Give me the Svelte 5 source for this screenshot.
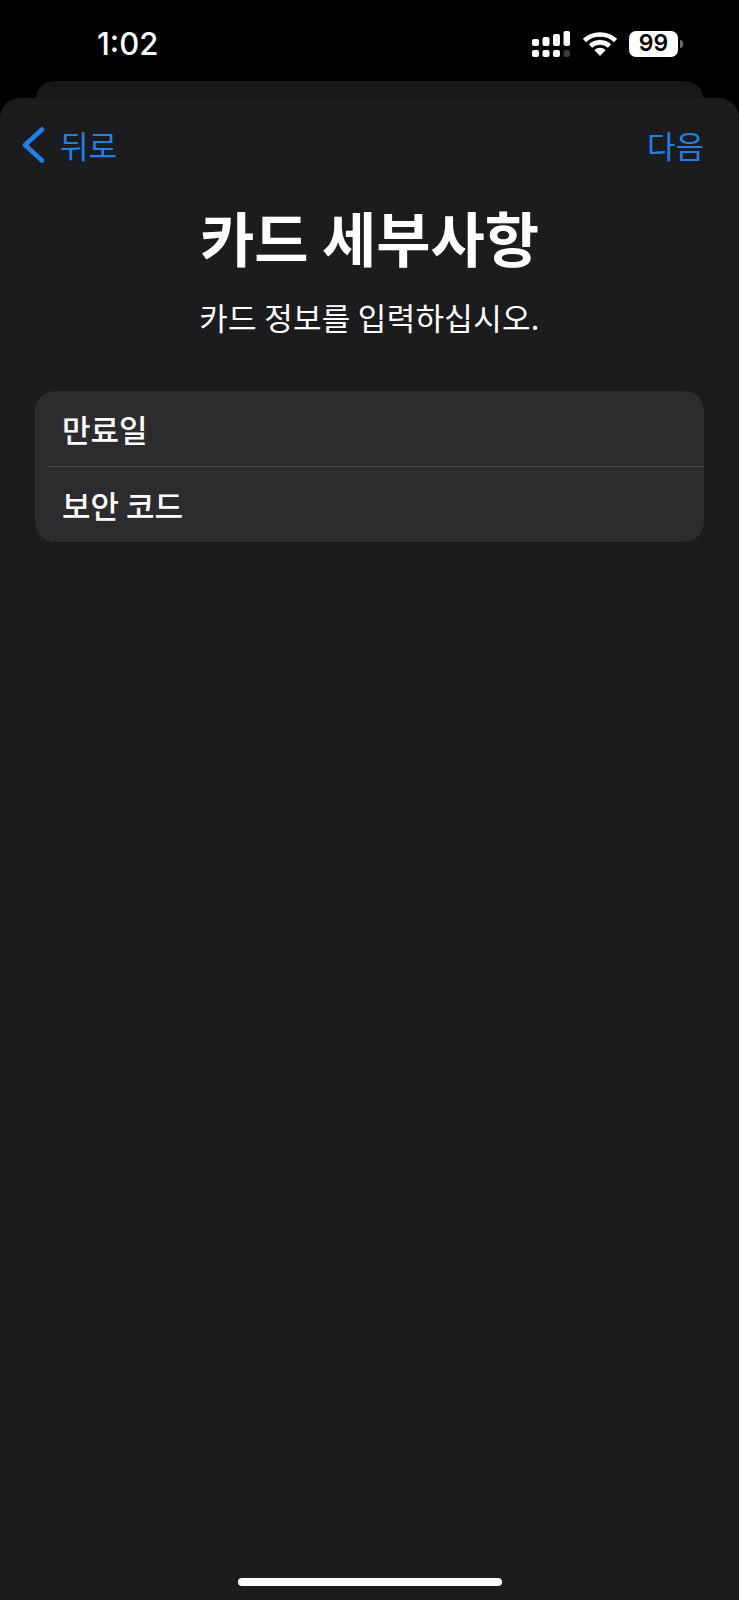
<script>
	const rows = ['만료일', '보안 코드'];
</script>

<div class="screen">
	<header class="status">
		<span class="time">1:02</span>
		<div class="indicators">
			<svg class="signal" width="38" height="26" viewBox="0 0 38 26" aria-hidden="true">
				<rect x="0" y="8" width="7" height="7" rx="2" fill="#fff" />
				<rect x="10.5" y="6" width="7" height="9" rx="2" fill="#fff" />
				<rect x="21" y="3" width="7" height="12" rx="2" fill="#fff" />
				<rect x="31.5" y="0" width="6.5" height="15" rx="2" fill="#fff" />
				<rect x="0" y="19" width="7" height="7" rx="2" fill="#fff" />
				<rect x="10.5" y="19" width="7" height="7" rx="2" fill="#fff" />
				<rect x="21" y="19" width="7" height="7" rx="2" fill="#fff" />
				<rect x="31.5" y="19" width="6.5" height="7" rx="2" fill="#3a3a3c" />
			</svg>
			<svg class="wifi" width="34" height="24" viewBox="0 0 34 24" aria-hidden="true">
				<path d="M1.5 8.5C10 0.5 24 0.5 32.5 8.5" fill="none" stroke="#fff" stroke-width="4.6" />
				<path d="M7.5 14C12.8 9.2 21.2 9.2 26.5 14" fill="none" stroke="#fff" stroke-width="4.6" />
				<path d="M11.5 18.2C14.8 15 19.2 15 22.5 18.2L17 24Z" fill="#fff" />
			</svg>
			<div class="battery"><span>99</span></div>
			<span class="nub"></span>
		</div>
	</header>

	<div class="sheet-back"></div>

	<main class="sheet">
		<nav class="nav">
			<button class="link back">
				<svg width="24" height="36" viewBox="0 0 24 36" aria-hidden="true">
					<path d="M21 2.5L4 18L21 33.5" fill="none" stroke="currentColor" stroke-width="4.6" stroke-linecap="round" stroke-linejoin="round" />
				</svg>
				<span>뒤로</span>
			</button>
			<button class="link">다음</button>
		</nav>

		<h1>카드 세부사항</h1>
		<p class="sub">카드 정보를 입력하십시오.</p>

		<section class="card">
			{#each rows as row (row)}
				<div class="row"><span>{row}</span></div>
			{/each}
		</section>

		<div class="home"></div>
	</main>
</div>

<style>
	:global(body) {
		background: #000;
	}

	.screen {
		width: 739px;
		height: 1600px;
		background: #000;
		display: flex;
		flex-direction: column;
		overflow: hidden;
		font-family: "Noto Sans CJK KR", "Liberation Sans", sans-serif;
		color: #fff;
	}

	.status {
		height: 81px;
		flex: none;
		display: flex;
		justify-content: space-between;
		align-items: center;
		padding: 6px 56px 0 97px;
		box-sizing: border-box;
	}

	.time {
		font-family: Inter, "Liberation Sans", sans-serif;
		font-size: 31px;
		font-weight: 500;
		line-height: 1;
	}

	.indicators {
		display: flex;
		align-items: center;
	}

	.wifi {
		margin-left: 13px;
	}

	.battery {
		margin-left: 12px;
		width: 49px;
		height: 26px;
		background: #fff;
		border-radius: 7px;
		color: #000;
		display: flex;
		align-items: center;
		justify-content: center;
		font-family: Inter, "Liberation Sans", sans-serif;
		font-size: 23px;
		font-weight: 600;
		line-height: 1;
	}

	.nub {
		width: 3px;
		height: 8px;
		margin-left: 2px;
		background: #6b6b6d;
		border-radius: 0 3px 3px 0;
	}

	.sheet-back {
		height: 40px;
		margin: 0 35px -23px;
		flex: none;
		background: #18181a;
		border-radius: 20px 20px 0 0;
	}

	.sheet {
		flex: 1;
		position: relative;
		background: #1c1c1e;
		border-radius: 20px 20px 0 0;
		display: flex;
		flex-direction: column;
		align-items: stretch;
	}

	.nav {
		display: flex;
		justify-content: space-between;
		align-items: center;
		height: 92px;
		padding: 0 35px 0 21px;
	}

	.back svg {
		margin-top: 2px;
	}

	.link {
		display: flex;
		align-items: center;
		gap: 15px;
		padding: 0;
		border: 0;
		background: none;
		color: #2080e8;
		font: inherit;
		font-size: 31px;
		line-height: 1;
	}

	h1 {
		margin: 12px 0 0;
		text-align: center;
		font-size: 59px;
		font-weight: 700;
		line-height: 70px;
	}

	.sub {
		margin: 23px 0 0;
		text-align: center;
		font-size: 31px;
		font-weight: 400;
		line-height: 44px;
		letter-spacing: 0.3px;
	}

	.card {
		margin: 52px 35px 0;
		background: #2c2c2e;
		border-radius: 20px;
		overflow: hidden;
	}

	.row {
		height: 75px;
		padding: 0 0 0 12px;
		display: flex;
		box-sizing: border-box;
	}

	.row + .row {
		height: 76px;
	}

	.row span {
		flex: 1;
		display: flex;
		align-items: center;
		padding-left: 15px;
		font-size: 31px;
		font-weight: 500;
	}

	.row + .row span {
		border-top: 1px solid #47474a;
	}

	.home {
		position: absolute;
		left: 238px;
		bottom: 14px;
		width: 264px;
		height: 8px;
		background: #fff;
		border-radius: 4px;
	}
</style>
